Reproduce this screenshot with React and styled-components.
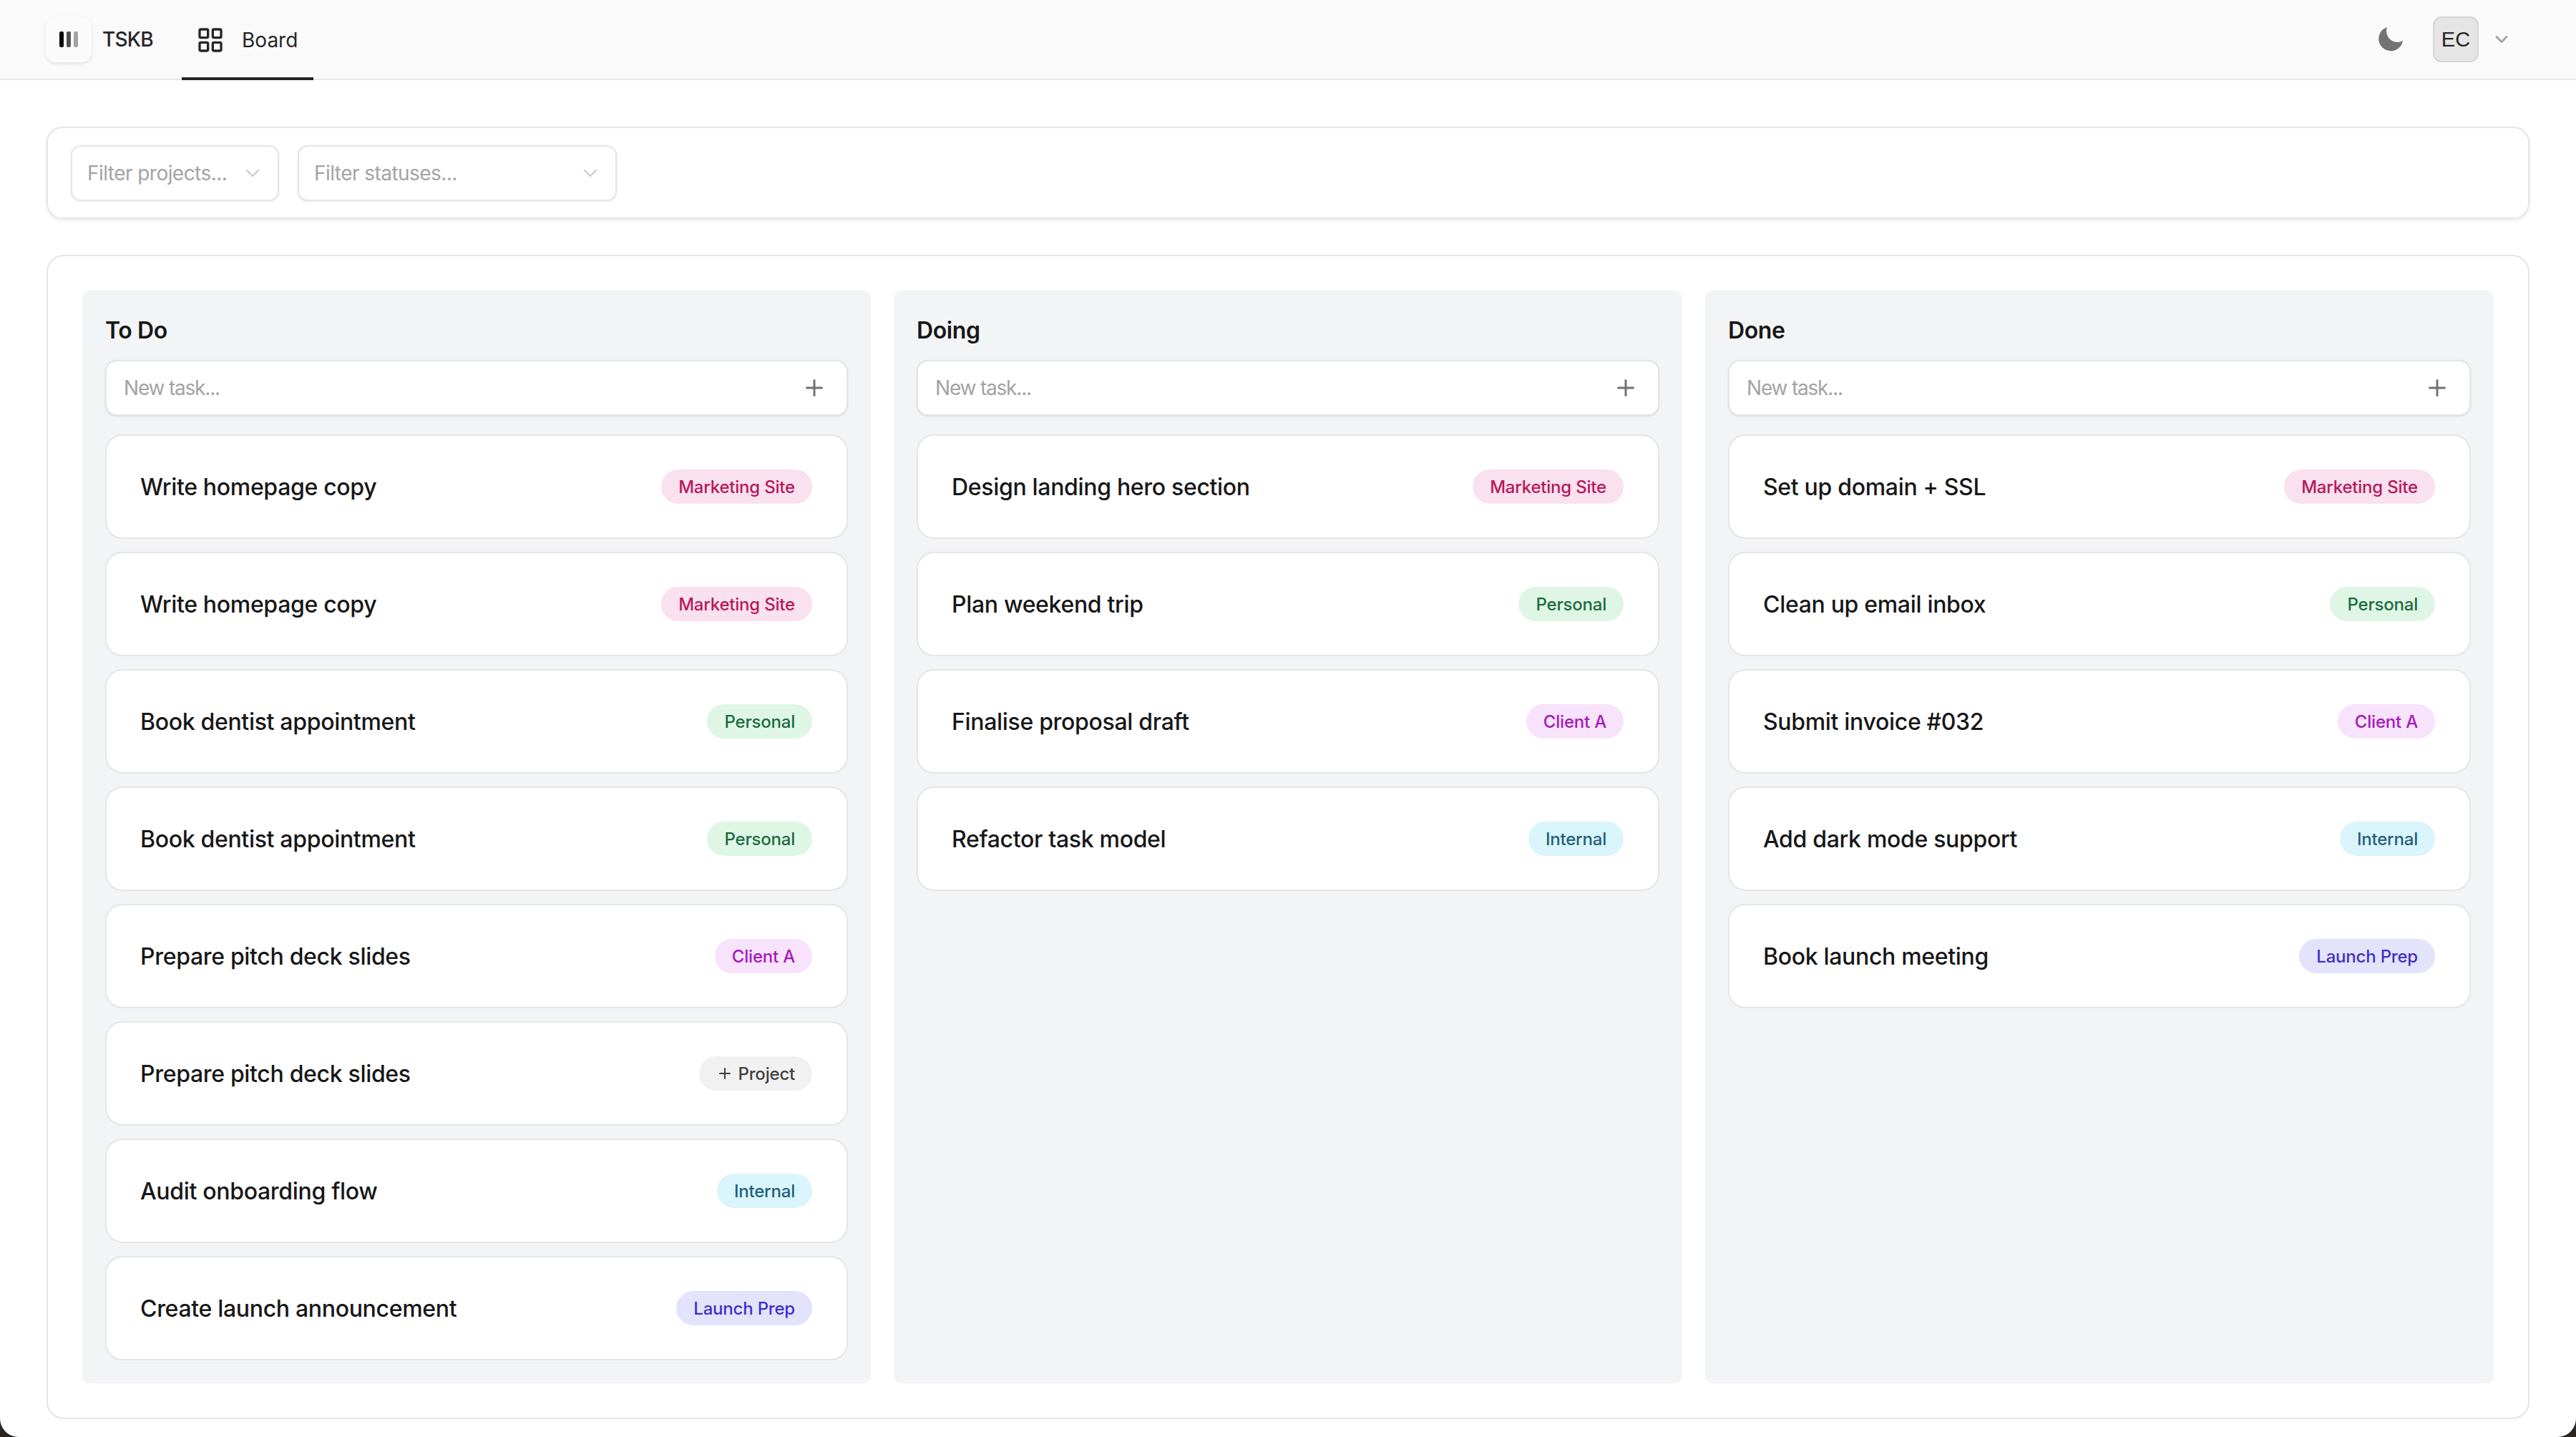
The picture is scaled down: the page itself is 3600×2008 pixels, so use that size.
import React from "react";
import styled, { createGlobalStyle } from "styled-components";
import { ChevronDown, LayoutGrid, Plus } from "lucide-react";

const tagColors = {
  "Marketing Site": { bg: "#fae1ef", fg: "#b8175a" },
  Personal: { bg: "#dff6e6", fg: "#1c6b3f" },
  "Client A": { bg: "#f8e3fc", fg: "#a41ab8" },
  Internal: { bg: "#daf5fc", fg: "#235f78" },
  "Launch Prep": { bg: "#e3e4fc", fg: "#4230c8" },
  Project: { bg: "#f1f1f1", fg: "#404040" },
};

const columns = [
  {
    title: "To Do",
    tasks: [
      ["Write homepage copy", "Marketing Site"],
      ["Write homepage copy", "Marketing Site"],
      ["Book dentist appointment", "Personal"],
      ["Book dentist appointment", "Personal"],
      ["Prepare pitch deck slides", "Client A"],
      ["Prepare pitch deck slides", "Project"],
      ["Audit onboarding flow", "Internal"],
      ["Create launch announcement", "Launch Prep"],
    ],
  },
  {
    title: "Doing",
    tasks: [
      ["Design landing hero section", "Marketing Site"],
      ["Plan weekend trip", "Personal"],
      ["Finalise proposal draft", "Client A"],
      ["Refactor task model", "Internal"],
    ],
  },
  {
    title: "Done",
    tasks: [
      ["Set up domain + SSL", "Marketing Site"],
      ["Clean up email inbox", "Personal"],
      ["Submit invoice #032", "Client A"],
      ["Add dark mode support", "Internal"],
      ["Book launch meeting", "Launch Prep"],
    ],
  },
];

export default function App() {
  return (
    <>
      <GlobalStyle />
      <Page>
        <Header>
          <HeaderGroup>
            <LogoBox>
              <LogoBar shade="#0a0a0a" />
              <LogoBar shade="#525252" />
              <LogoBar shade="#a3a3a3" />
            </LogoBox>
            <Brand>TSKB</Brand>
            <Tab>
              <LayoutGrid size={40} strokeWidth={2} color="#262626" />
              Board
            </Tab>
          </HeaderGroup>
          <HeaderGroup>
            <MoonIcon viewBox="0 0 34 34">
              <path d="M12 0 A17 17 0 1 0 34 19 A15.5 15.5 0 0 1 12 0 Z" fill="#737373" />
            </MoonIcon>
            <Avatar>EC</Avatar>
            <UserChevron>
              <ChevronDown size={28} strokeWidth={2.4} color="#a3a3a3" />
            </UserChevron>
          </HeaderGroup>
        </Header>
        <Main>
          <FilterBar>
            <Select width="291px">
              Filter projects...
              <ChevronDown size={32} strokeWidth={2} color="#d4d4d4" />
            </Select>
            <Select width="446px">
              Filter statuses...
              <ChevronDown size={32} strokeWidth={2} color="#d4d4d4" />
            </Select>
          </FilterBar>
          <Board>
            {columns.map((column) => (
              <Column key={column.title}>
                <ColumnTitle>{column.title}</ColumnTitle>
                <NewTask>
                  New task...
                  <Plus size={36} strokeWidth={2} color="#737373" />
                </NewTask>
                {column.tasks.map(([name, tag], index) => (
                  <Card key={index}>
                    {name}
                    <Tag colors={tagColors[tag]}>
                      {tag === "Project" && <Plus size={24} strokeWidth={2} />}
                      {tag}
                    </Tag>
                  </Card>
                ))}
              </Column>
            ))}
          </Board>
        </Main>
      </Page>
    </>
  );
}

const GlobalStyle = createGlobalStyle`
  html, body {
    margin: 0;
    background: #2b2622;
  }

  * {
    box-sizing: border-box;
  }
`;

const Page = styled.div`
  height: 2008px;
  background: #fff;
  border-radius: 0 0 26px 26px;
  overflow: hidden;
  font-family: Inter, "Liberation Sans", sans-serif;
  color: #171717;
`;

const Header = styled.header`
  height: 112px;
  padding: 0 90px 0 64px;
  display: flex;
  align-items: center;
  justify-content: space-between;
  background: #fafafa;
  border-bottom: 2px solid #e5e5e5;
`;

const HeaderGroup = styled.div`
  display: flex;
  align-items: center;
  height: 110px;
`;

const LogoBox = styled.div`
  width: 64px;
  height: 64px;
  display: flex;
  align-items: center;
  justify-content: center;
  gap: 3.5px;
  background: #fbfbfb;
  border-radius: 14px;
  box-shadow: 0 2px 5px rgba(0, 0, 0, 0.1);
`;

const LogoBar = styled.span`
  width: 6.5px;
  height: 22px;
  border-radius: 2px;
  background: ${(p) => p.shade};
`;

const Brand = styled.span`
  width: 69px;
  margin: 0 42px 0 15px;
  font-size: 28px;
  font-weight: 500;
  letter-spacing: -0.8px;
  color: #262626;
`;

const Tab = styled.div`
  height: 112px;
  margin-bottom: -2px;
  padding: 4px 22px 0 20px;
  display: flex;
  align-items: center;
  gap: 24px;
  font-size: 28px;
  color: #262626;
  border-bottom: 4px solid #262626;
`;

const MoonIcon = styled.svg`
  width: 34px;
  height: 34px;
  margin-right: 42px;
`;

const Avatar = styled.div`
  width: 64px;
  height: 64px;
  display: flex;
  align-items: center;
  justify-content: center;
  background: #e5e5e5;
  border: 2px solid #d4d4d4;
  border-radius: 12px;
  font-family: "Liberation Sans", sans-serif;
  font-size: 29px;
  color: #262626;
`;

const UserChevron = styled.span`
  display: flex;
  margin-left: 18px;
`;

const Main = styled.main`
  padding: 65px 65px 0;
  display: flex;
  flex-direction: column;
  gap: 50px;
`;

const FilterBar = styled.section`
  height: 129px;
  padding: 0 32px;
  display: flex;
  align-items: center;
  gap: 26px;
  background: #fff;
  border: 2px solid #e5e5e5;
  border-radius: 22px;
  box-shadow: 0 2px 5px rgba(0, 0, 0, 0.08);
`;

const Select = styled.div`
  width: ${(p) => p.width};
  height: 78px;
  padding: 0 19px 0 21px;
  display: flex;
  align-items: center;
  justify-content: space-between;
  background: #fff;
  border: 2px solid #e5e5e5;
  border-radius: 14px;
  box-shadow: 0 1px 3px rgba(0, 0, 0, 0.08);
  font-size: 28px;
  letter-spacing: -0.55px;
  color: #a3a3a3;
`;

const Board = styled.section`
  height: 1627px;
  padding: 48px;
  display: grid;
  grid-template-columns: repeat(3, 1fr);
  gap: 32px;
  border: 2px solid #e5e5e5;
  border-radius: 24px;
`;

const Column = styled.div`
  padding: 32px;
  display: flex;
  flex-direction: column;
  gap: 18px;
  background: #f3f4f6;
  border-radius: 10px;
`;

const ColumnTitle = styled.h2`
  margin: 0 0 -1px;
  font-size: 32px;
  line-height: 48px;
  font-weight: 600;
  letter-spacing: -0.4px;
  color: #171717;
`;

const NewTask = styled.div`
  height: 78px;
  margin-bottom: 8px;
  padding: 0 27px 0 24px;
  display: flex;
  align-items: center;
  justify-content: space-between;
  background: #fff;
  border: 2px solid #e5e5e5;
  border-radius: 16px;
  box-shadow: 0 1px 3px rgba(0, 0, 0, 0.1);
  font-size: 28px;
  letter-spacing: -1.2px;
  color: #a3a3a3;
`;

const Card = styled.div`
  height: 146px;
  padding: 0 48px 0 47px;
  display: flex;
  align-items: center;
  justify-content: space-between;
  background: #fff;
  border: 2px solid #e5e5e5;
  border-radius: 24px;
  font-size: 32px;
  font-weight: 500;
  letter-spacing: -0.32px;
  color: #171717;
`;

const Tag = styled.span`
  height: 48px;
  padding: 0 24px;
  display: flex;
  align-items: center;
  gap: 7px;
  border-radius: 24px;
  background: ${(p) => p.colors.bg};
  color: ${(p) => p.colors.fg};
  font-size: 24px;
  font-weight: 500;
  letter-spacing: -0.2px;
`;
